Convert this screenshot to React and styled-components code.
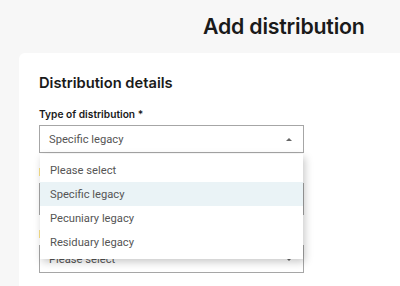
import styled, { createGlobalStyle } from "styled-components";

const Global = createGlobalStyle`
  html, body {
    margin: 0;
    background: #f7f7f7;
    font-family: Inter, "Noto Sans", sans-serif;
    color: #1a1a1a;
    overflow: hidden;
  }
`;

const Page = styled.div`
  padding-top: 13px;
  padding-left: 19px;
`;

const Heading = styled.h1`
  margin: 0 0 14px 184px;
  font-size: 21.3px;
  font-weight: 600;
  line-height: 26px;
  letter-spacing: -0.2px;
`;

const Card = styled.div`
  background: #fff;
  border-radius: 6px 0 0 0;
  padding: 20px 0 20px 20px;
  width: 400px;
  height: 250px;
  box-sizing: border-box;
  overflow: hidden;
`;

const CardTitle = styled.h2`
  margin: 0 0 14px;
  font-size: 14.7px;
  font-weight: 600;
  line-height: 20px;
`;

const Field = styled.div`
  width: 265px;
  margin-bottom: 12px;
`;

const Label = styled.div`
  font-size: 10.2px;
  font-weight: 600;
  line-height: 14px;
  margin-bottom: 4px;
  color: ${({ $muted }) => ($muted ? "#c9a14a" : "inherit")};
`;

const SelectWrap = styled.div`
  position: relative;
`;

const Select = styled.div`
  box-sizing: border-box;
  height: ${({ $tall }) => ($tall ? "32px" : "28px")};
  border: 1px solid #a6a6a6;
  display: flex;
  align-items: center;
  justify-content: space-between;
  padding: 0 11px 0 9px;
  font-family: Roboto, "Liberation Sans", sans-serif;
  font-size: 11.2px;
  color: #555;
`;

const Caret = styled.span`
  width: 0;
  height: 0;
  border-left: 3px solid transparent;
  border-right: 3px solid transparent;
  ${({ $up }) =>
    $up ? "border-bottom: 3px solid #666;" : "border-top: 3px solid #666;"}
`;

const Menu = styled.ul`
  position: absolute;
  top: 29px;
  left: 1px;
  right: 1px;
  margin: 0;
  padding: 4px 0 5px;
  list-style: none;
  background: #fff;
  box-shadow: 2px 3px 8px rgba(0, 0, 0, 0.22);
  z-index: 2;
`;

const Option = styled.li`
  height: 24px;
  display: flex;
  align-items: center;
  padding-left: 10px;
  font-family: Roboto, "Liberation Sans", sans-serif;
  font-size: 11.2px;
  color: #555;
  background: ${({ $active }) => ($active ? "#eaf3f6" : "transparent")};
`;

const options = ["Please select", "Specific legacy", "Pecuniary legacy", "Residuary legacy"];

export default function App() {
  return (
    <Page>
      <Global />
      <Heading>Add distribution</Heading>
      <Card>
        <CardTitle>Distribution details</CardTitle>
        <Field>
          <Label>Type of distribution *</Label>
          <SelectWrap>
            <Select>
              Specific legacy
              <Caret $up />
            </Select>
            <Menu>
              {options.map((o) => (
                <Option key={o} $active={o === "Specific legacy"}>
                  {o}
                </Option>
              ))}
            </Menu>
          </SelectWrap>
        </Field>
        <Field>
          <Label $muted>Description *</Label>
          <Select $tall />
        </Field>
        <Field>
          <Label $muted>Beneficiary *</Label>
          <Select>
            Please select
            <Caret />
          </Select>
        </Field>
      </Card>
    </Page>
  );
}
